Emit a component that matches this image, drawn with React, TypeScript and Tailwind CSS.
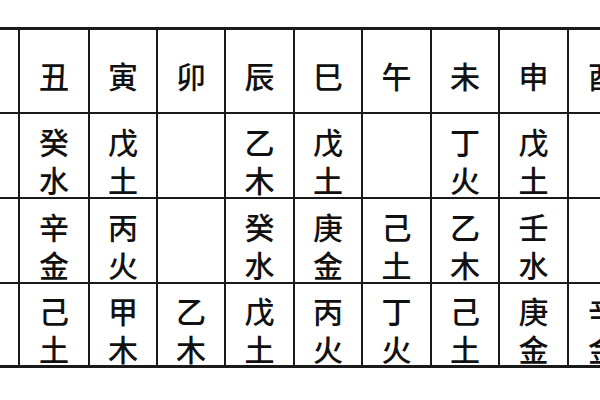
import React from "react";

const header = ["", "丑", "寅", "卯", "辰", "巳", "午", "未", "申", "酉"];
const rows: string[][] = [
  ["", "癸水", "戊土", "", "乙木", "戊土", "", "丁火", "戊土", ""],
  ["", "辛金", "丙火", "", "癸水", "庚金", "己土", "乙木", "壬水", ""],
  ["", "己土", "甲木", "乙木", "戊土", "丙火", "丁火", "己土", "庚金", "辛金"],
];

function Cell({ text }: { text: string }) {
  return (
    <div className="bg-white flex flex-col items-center justify-center pt-[8px] text-[30px] leading-[38px] font-medium text-[#111111]">
      {Array.from(text).map((c, i) => (
        <span key={i} className="block h-[38px]">
          {c}
        </span>
      ))}
    </div>
  );
}

export default function App() {
  return (
    <div
      className="w-[600px] h-[400px] bg-white overflow-hidden pt-[27px]"
      style={{ fontFamily: '"Noto Sans CJK SC", "Noto Sans", sans-serif' }}
    >
      <div className="ml-[-50px] w-[680px] border-y-[3px] border-[#1a1a1a] bg-[#1a1a1a] grid grid-cols-[68px_68px_66px_66px_67px_66px_67px_66px_67px_68px] grid-rows-[82px_83px_83px_81px] gap-[2px]">
        {header.map((h, i) => (
          <Cell key={"h" + i} text={h} />
        ))}
        {rows.map((r, ri) =>
          r.map((t, ci) => <Cell key={ri + "-" + ci} text={t} />)
        )}
      </div>
    </div>
  );
}
